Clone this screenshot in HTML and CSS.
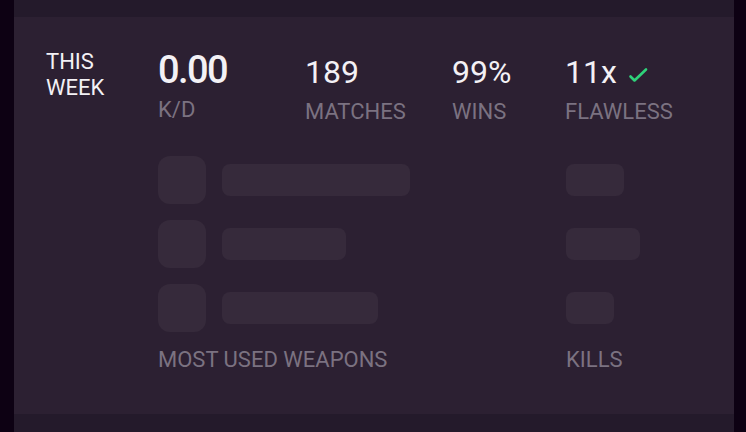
FILE: index.html
```html
<!DOCTYPE html>
<html>
<head>
<meta charset="utf-8">
<link rel="stylesheet" href="styles.css">
</head>
<body>
<div class="page">
  <section class="card">
    <div class="period">THIS<br>WEEK</div>
    <div class="main">
      <div class="stats">
        <div class="stat stat-kd">
          <div class="value value-big">0.00</div>
          <div class="label">K/D</div>
        </div>
        <div class="stat stat-matches">
          <div class="value">189</div>
          <div class="label">MATCHES</div>
        </div>
        <div class="stat stat-wins">
          <div class="value">99%</div>
          <div class="label">WINS</div>
        </div>
        <div class="stat stat-flawless">
          <div class="value">11x<svg class="check" width="22" height="16" viewBox="0 0 22 16"><polyline points="2.5,9.5 6.5,13.5 18,2.5" fill="none" stroke="#2fd27a" stroke-width="2.6" stroke-linecap="round" stroke-linejoin="round"/></svg></div>
          <div class="label">FLAWLESS</div>
        </div>
      </div>
      <div class="breakdown">
        <div class="weapons">
          <div class="wrow"><span class="icon-skel"></span><span class="bar-skel" style="width:188px"></span></div>
          <div class="wrow"><span class="icon-skel"></span><span class="bar-skel" style="width:124px"></span></div>
          <div class="wrow"><span class="icon-skel"></span><span class="bar-skel" style="width:156px"></span></div>
        </div>
        <div class="kills">
          <div class="krow"><span class="bar-skel" style="width:58px"></span></div>
          <div class="krow"><span class="bar-skel" style="width:74px"></span></div>
          <div class="krow"><span class="bar-skel" style="width:48px"></span></div>
        </div>
        <div class="label foot">MOST USED WEAPONS</div>
        <div class="label foot">KILLS</div>
      </div>
    </div>
  </section>
</div>
</body>
</html>
```
FILE: styles.css
```css
html, body {
  margin: 0;
  padding: 0;
  background: #0d0113;
  font-family: Roboto, "Liberation Sans", sans-serif;
}
.page {
  margin: 0 12px 0 14px;
  height: 432px;
  box-sizing: border-box;
  padding: 17px 0 18px;
  background: #241a2b;
}
.card {
  height: 397px;
  box-sizing: border-box;
  background: #2c2032;
  display: flex;
  padding-left: 32px;
}
.period {
  width: 112px;
  padding-top: 32px;
  font-size: 22px;
  line-height: 26px;
  color: #f3f1f5;
}
.main {
  padding-top: 35px;
  flex: 1;
}
.stats {
  display: flex;
  align-items: baseline;
}
.stat-kd, .stat-matches { width: 147px; }
.stat-wins { width: 113px; }
.value {
  font-size: 32px;
  line-height: 36px;
  color: #f3f1f5;
  display: flex;
  align-items: center;
}
.value-big {
  font-size: 38px;
  font-weight: 500;
  letter-spacing: -1.6px;
}
.check {
  margin-left: 11px;
  margin-top: 5px;
}
.label {
  font-size: 22px;
  line-height: 26px;
  color: #7b7281;
  margin-top: 9px;
}
.breakdown {
  margin-top: 31px;
  display: grid;
  grid-template-columns: 408px auto;
}
.weapons, .kills {
  display: flex;
  flex-direction: column;
  gap: 16px;
}
.wrow, .krow {
  height: 48px;
  display: flex;
  align-items: center;
}
.icon-skel {
  width: 48px;
  height: 48px;
  border-radius: 12px;
  background: #362a3b;
}
.bar-skel {
  height: 32px;
  border-radius: 8px;
  background: #362a3b;
}
.wrow .bar-skel { margin-left: 16px; }
.foot {
  margin-top: 15px;
}
```
